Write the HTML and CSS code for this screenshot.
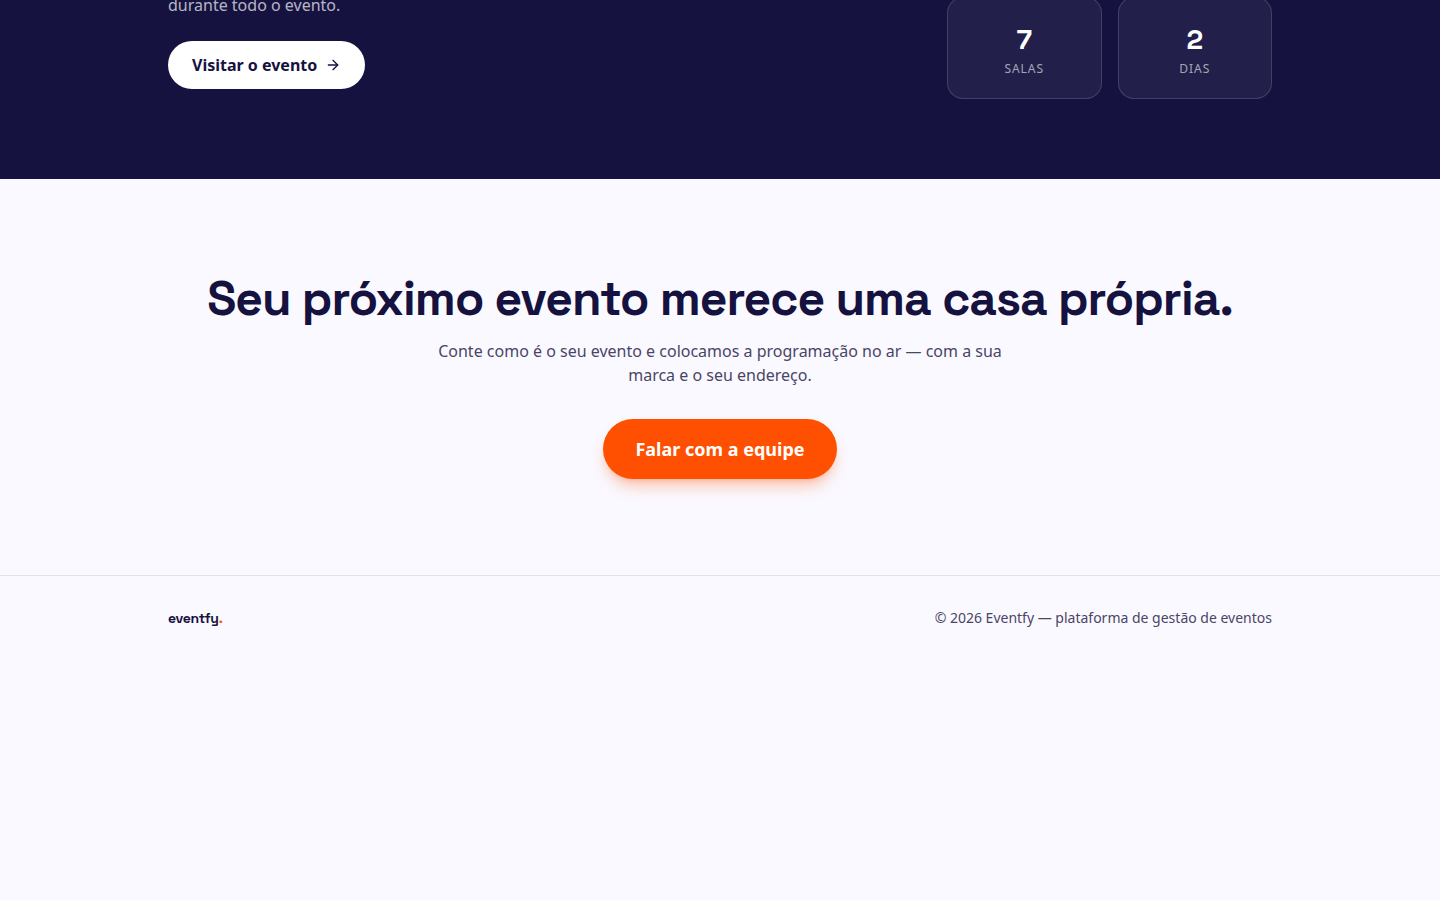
FILE: index.html
```
<!DOCTYPE html>
<html lang="pt-BR">
<head>
  <meta charset="UTF-8" />
  <meta name="viewport" content="width=device-width, initial-scale=1.0" />
  <title>Eventfy</title>
  <link rel="stylesheet" href="styles.css">
</head>
<body>
  <section class="showcase">
    <div class="container showcase-grid">
      <div class="showcase-copy">
        <p>durante todo o evento.</p>
        <a class="btn btn-light" href="#">
          Visitar o evento
          <svg class="arrow" viewBox="0 0 24 24" aria-hidden="true"><path d="M5 12h14"/><path d="m12 5 7 7-7 7"/></svg>
        </a>
      </div>
      <dl class="stats">
        <div class="stat"><dd>7</dd><dt>Salas</dt></div>
        <div class="stat"><dd>2</dd><dt>Dias</dt></div>
      </dl>
    </div>
  </section>

  <section class="cta container">
    <h2>Seu próximo evento merece uma casa própria.</h2>
    <p>Conte como é o seu evento e colocamos a programação no ar — com a sua marca e o seu endereço.</p>
    <a class="btn btn-primary" href="#">Falar com a equipe</a>
  </section>

  <footer class="footer">
    <div class="container footer-row">
      <span class="logo">eventfy<span class="dot">.</span></span>
      <span>© 2026 Eventfy — plataforma de gestão de eventos</span>
    </div>
  </footer>
</body>
</html>
```

FILE: styles.css
```
:root {
  --ink: #161240;
  --muted: #4a4566;
  --paper: #faf9ff;
  --orange: #ff4f00;
  --display: "Space Grotesk", Inter, sans-serif;
}
* { box-sizing: border-box; }
body {
  margin: 0;
  background: var(--paper);
  color: var(--ink);
  font-family: "Noto Sans", sans-serif;
  font-size: 16px;
  line-height: 24px;
}
h2, p, dl, dd { margin: 0; }
.container { max-width: 1152px; margin: 0 auto; padding: 0 24px; }

.btn { display: inline-flex; align-items: center; border-radius: 999px; text-decoration: none; font-weight: 700; }
.btn-light { gap: 8px; padding: 12px 24px; background: #fff; color: var(--ink); }
.btn-primary {
  padding: 16px 32px; background: var(--orange); color: #fff;
  font-size: 18px; line-height: 28px;
  box-shadow: 0 10px 15px -3px rgba(255,79,0,.3), 0 4px 6px -4px rgba(255,79,0,.3);
}
.arrow { width: 16px; height: 16px; fill: none; stroke: currentColor; stroke-width: 2; stroke-linecap: round; stroke-linejoin: round; }

/* Showcase */
.showcase { overflow: hidden; padding-bottom: 80px; background: var(--ink); }
.showcase-grid { display: grid; grid-template-columns: 1fr 325px; gap: 48px; margin-top: -7px; }
.showcase-copy { padding-bottom: 10px; }
.showcase-copy p { margin-bottom: 24px; color: rgba(255,255,255,.7); }
.stats { display: grid; grid-template-columns: 1fr 1fr; gap: 16px; align-self: end; }
.stat {
  padding: 20px; text-align: center; border-radius: 16px;
  background: rgba(255,255,255,.06); border: 1px solid rgba(255,255,255,.15);
}
.stat dd { font-family: var(--display); font-size: 28px; font-weight: 700; line-height: 42px; color: #fff; }
.stat dt { font-size: 12px; line-height: 18px; letter-spacing: 0.08em; text-transform: uppercase; color: rgba(255,255,255,.6); }

/* Call to action */
.cta { padding-top: 96px; padding-bottom: 96px; text-align: center; }
.cta h2 { font-family: var(--display); font-size: 48px; font-weight: 600; line-height: 48px; letter-spacing: -0.02em; }
.cta p { max-width: 576px; margin: 16px auto 32px; color: var(--muted); }
.cta .btn { vertical-align: top; }

/* Footer */
.footer { border-top: 1px solid #e3e1ec; font-size: 14px; line-height: 20px; color: var(--muted); }
.footer-row { display: flex; justify-content: space-between; align-items: center; padding-top: 32px; padding-bottom: 32px; }
.logo { font-family: var(--display); font-weight: 700; letter-spacing: -0.02em; color: var(--ink); }
.dot { color: var(--orange); }
```
